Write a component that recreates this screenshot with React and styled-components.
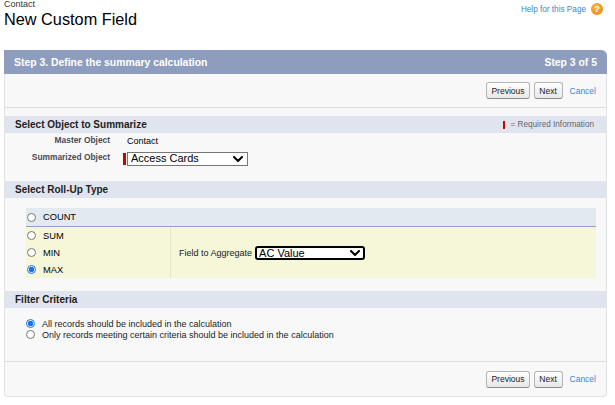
import React from 'react'
import styled, { createGlobalStyle } from 'styled-components'

const GlobalStyle = createGlobalStyle`
  html, body {
    margin: 0;
    padding: 0;
    background: #fff;
  }
  body {
    font-family: "Liberation Sans", Arial, sans-serif;
    color: #000;
  }
`

const Page = styled.div`
  width: 615px;
  height: 405px;
  box-sizing: border-box;
  padding: 0 8px 0 4px;
  overflow: hidden;
`

const TopBar = styled.div`
  height: 50px;
  display: flex;
  justify-content: space-between;
  align-items: flex-start;
`

const Breadcrumb = styled.div`
  font-size: 9px;
  line-height: 9px;
  color: #333;
`

const Title = styled.h1`
  margin: 0;
  font-size: 16.3px;
  line-height: 20px;
  font-weight: normal;
  color: #000;
`

const HelpLink = styled.a`
  display: flex;
  align-items: center;
  gap: 5px;
  margin: 3px 4px 0 0;
  font-size: 8.2px;
  color: #3f86cc;
  text-decoration: none;
`

const HelpIcon = styled.span`
  width: 12px;
  height: 12px;
  border-radius: 50%;
  background: radial-gradient(circle at 40% 35%, #f8b447, #e5850b);
  color: #fff;
  font-weight: bold;
  font-size: 9px;
  display: flex;
  align-items: center;
  justify-content: center;
`

const Panel = styled.div`
  background: #f8f8f8;
  border: 1px solid #e2e2e2;
  border-top: none;
  border-radius: 0 5px 4px 4px;
`

const StepHeader = styled.div`
  height: 24px;
  margin: 0 -1px;
  padding: 0 10px;
  background: #8e9dbe;
  border-radius: 0 6px 0 0;
  display: flex;
  justify-content: space-between;
  align-items: center;
  color: #fff;
  font-weight: bold;
  font-size: 10.4px;
`

const ButtonBar = styled.div`
  height: ${p => (p.$bottom ? 34 : 33)}px;
  display: flex;
  justify-content: flex-end;
  align-items: center;
  gap: 4px;
  padding-right: 10px;
  border-${p => (p.$bottom ? 'top' : 'bottom')}: 1px solid #dcdcdc;
`

const Button = styled.button`
  height: 17px;
  min-width: 29px;
  padding: 0 4px;
  border: 1px solid #b5b5b5;
  border-bottom-color: #8a8a8a;
  border-radius: 3px;
  background: linear-gradient(#fefefe, #e8e8e8);
  font-family: "Liberation Sans", Arial, sans-serif;
  font-size: 8.5px;
  color: #222;
`

const CancelLink = styled.a`
  margin-left: 3px;
  font-size: 8.5px;
  color: #3f86cc;
  text-decoration: none;
`

const FormBody = styled.div`
  padding-top: 8px;
`

const SectionHeader = styled.div`
  height: 17px;
  padding: 0 12px 0 10px;
  background: #e0e4ee;
  display: flex;
  justify-content: space-between;
  align-items: center;
  font-size: 10px;
  font-weight: bold;
  color: #222;
`

const RequiredNote = styled.span`
  display: flex;
  align-items: center;
  gap: 5px;
  font-size: 8.2px;
  font-weight: normal;
  color: #666;
`

const RequiredMark = styled.span`
  width: ${p => p.$w || 3}px;
  height: ${p => p.$h || 12}px;
  background: #c00;
  flex-shrink: 0;
`

const ObjectBody = styled.div`
  height: 48px;
  box-sizing: border-box;
  padding-top: 1px;
  display: grid;
  grid-template-columns: 118px 1fr;
  grid-auto-rows: min-content;
  row-gap: 3px;
`

const FieldLabel = styled.div`
  height: ${p => p.$h}px;
  padding-right: 13px;
  box-sizing: border-box;
  text-align: right;
  font-size: 8.4px;
  font-weight: bold;
  line-height: 12px;
  color: #4a4a56;
`

const FieldValue = styled.div`
  height: ${p => p.$h}px;
  display: flex;
  align-items: center;
  gap: 1px;
  padding-left: ${p => p.$pad || 0}px;
  font-size: 9px;
`

const SelectWrap = styled.div`
  position: relative;
  width: ${p => p.$w}px;
  height: ${p => p.$h}px;
`

const Select = styled.select`
  appearance: none;
  width: 100%;
  height: 100%;
  box-sizing: border-box;
  margin: 0;
  padding: 0 0 0 ${p => (p.$strong ? 2 : 3)}px;
  border: ${p => (p.$strong ? '2px solid #000' : '1px solid #767676')};
  border-radius: ${p => (p.$strong ? 3 : 0)}px;
  background: #fff;
  font-family: "Liberation Sans", Arial, sans-serif;
  font-size: 11px;
  line-height: 1;
  color: #000;
  outline: none;
`

const Chevron = styled.svg`
  position: absolute;
  right: 5px;
  top: 50%;
  margin-top: -3px;
  pointer-events: none;
`

const RollupBody = styled.div`
  padding: 10px 10px 13px 21px;
`

const CountRow = styled.div`
  height: 18px;
  padding-left: 1px;
  background: #e3e9f1;
  border-bottom: 1px solid #8fa3c7;
  display: flex;
  align-items: center;
  gap: 7px;
  font-size: 9.3px;
`

const AggregateRow = styled.div`
  height: 51px;
  display: flex;
  background: #f6f6d9;
`

const OptionColumn = styled.div`
  width: 143px;
  padding-left: 1px;
  border-right: 1px solid #e6e6c8;
`

const OptionRow = styled.label`
  height: 17px;
  display: flex;
  align-items: center;
  gap: 7px;
  font-size: 9.3px;
`

const FieldCell = styled.div`
  display: flex;
  align-items: center;
  gap: 3px;
  padding-left: 8px;
  font-size: 9px;
  color: #222;
`

const Radio = styled.input.attrs({ type: 'radio' })`
  width: 9px;
  height: 9px;
  margin: 0;
  accent-color: #1a73e8;
`

const FilterBody = styled.div`
  height: 53px;
  box-sizing: border-box;
  padding: 10px 0 0 21px;
`

const FilterOption = styled.label`
  height: 11px;
  display: flex;
  align-items: center;
  gap: 7px;
  font-size: 9px;
  color: #222;
`

const ChevronIcon = () => (
  <Chevron width="10" height="6" viewBox="0 0 10 6">
    <path d="M1 1 L5 5 L9 1" fill="none" stroke="#000" strokeWidth="2" strokeLinecap="round" strokeLinejoin="round" />
  </Chevron>
)

const Actions = ({ bottom }) => (
  <ButtonBar $bottom={bottom}>
    <Button>Previous</Button>
    <Button>Next</Button>
    <CancelLink href="#">Cancel</CancelLink>
  </ButtonBar>
)

export default function App() {
  return (
    <Page>
      <GlobalStyle />
      <TopBar>
        <div>
          <Breadcrumb>Contact</Breadcrumb>
          <Title>New Custom Field</Title>
        </div>
        <HelpLink href="#">
          Help for this Page
          <HelpIcon>?</HelpIcon>
        </HelpLink>
      </TopBar>

      <Panel>
        <StepHeader>
          <span>Step 3. Define the summary calculation</span>
          <span>Step 3 of 5</span>
        </StepHeader>
        <Actions />

        <FormBody>
          <SectionHeader>
            Select Object to Summarize
            <RequiredNote>
              <RequiredMark $w={2} $h={8} />= Required Information
            </RequiredNote>
          </SectionHeader>
          <ObjectBody>
            <FieldLabel $h={14}>Master Object</FieldLabel>
            <FieldValue $h={14} $pad={4}>Contact</FieldValue>
            <FieldLabel $h={15}>Summarized Object</FieldLabel>
            <FieldValue $h={15}>
              <RequiredMark />
              <SelectWrap $w={121} $h={14}>
                <Select defaultValue="ac">
                  <option value="ac">Access Cards</option>
                </Select>
                <ChevronIcon />
              </SelectWrap>
            </FieldValue>
          </ObjectBody>

          <SectionHeader>Select Roll-Up Type</SectionHeader>
          <RollupBody>
            <CountRow>
              <Radio name="rollup" />
              COUNT
            </CountRow>
            <AggregateRow>
              <OptionColumn>
                <OptionRow><Radio name="rollup" />SUM</OptionRow>
                <OptionRow><Radio name="rollup" />MIN</OptionRow>
                <OptionRow><Radio name="rollup" defaultChecked />MAX</OptionRow>
              </OptionColumn>
              <FieldCell>
                Field to Aggregate
                <SelectWrap $w={110} $h={14}>
                  <Select $strong defaultValue="acv">
                    <option value="acv">AC Value</option>
                  </Select>
                  <ChevronIcon />
                </SelectWrap>
              </FieldCell>
            </AggregateRow>
          </RollupBody>

          <SectionHeader>Filter Criteria</SectionHeader>
          <FilterBody>
            <FilterOption>
              <Radio name="filter" defaultChecked />
              All records should be included in the calculation
            </FilterOption>
            <FilterOption>
              <Radio name="filter" />
              Only records meeting certain criteria should be included in the calculation
            </FilterOption>
          </FilterBody>
        </FormBody>

        <Actions bottom />
      </Panel>
    </Page>
  )
}
